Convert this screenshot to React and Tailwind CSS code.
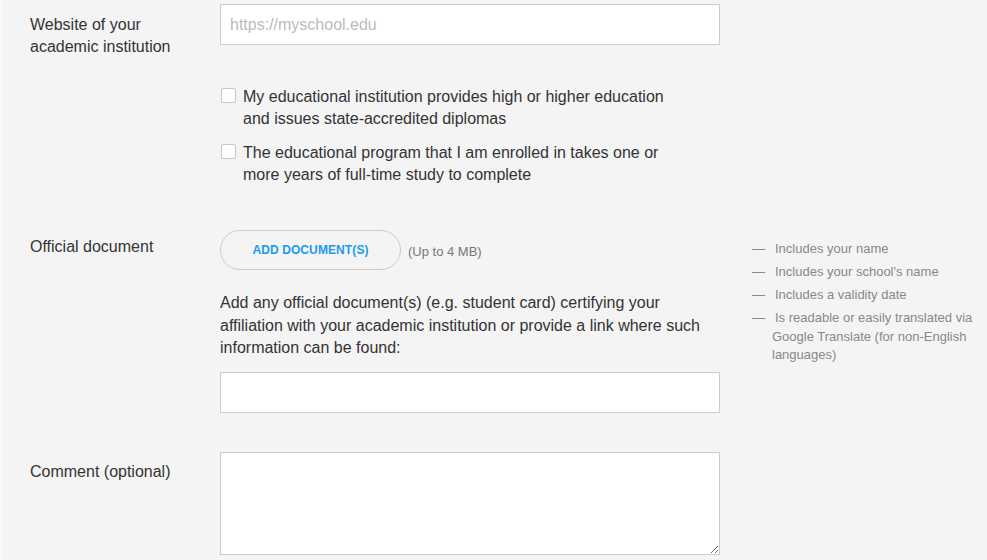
export default function App() {
  const font = { fontFamily: '"Liberation Sans", Arial, sans-serif' };
  return (
    <div style={font} className="w-[987px] h-[560px] overflow-hidden bg-[#f4f4f4] border-l-2 border-[#fafafa] text-[#333]">
      <div className="flex pl-[28px]">
        {/* left labels + center */}
        <div className="w-[692px] shrink-0">
          {/* Website row */}
          <div className="flex pt-[4px]">
            <div className="w-[190px] shrink-0 text-[16px] leading-[22px] pt-[10px]">
              Website of your<br />academic institution
            </div>
            <div className="w-[500px]">
              <input
                className="w-[500px] h-[41px] bg-white border border-[#ccc] px-[9px] text-[16px] outline-none placeholder:text-[#bbb]"
                placeholder="https://myschool.edu"
                style={font}
              />
              <div className="mt-[41px] flex flex-col gap-[12px]">
                <label className="flex items-start">
                  <span className="mt-[2px] ml-[1px] w-[15px] h-[15px] bg-white border border-[#c8c8c8] rounded-[2px] shrink-0" />
                  <span className="ml-[7px] text-[16px] leading-[22px]">
                    My educational institution provides high or higher education<br />and issues state-accredited diplomas
                  </span>
                </label>
                <label className="flex items-start">
                  <span className="mt-[2px] ml-[1px] w-[15px] h-[15px] bg-white border border-[#c8c8c8] rounded-[2px] shrink-0" />
                  <span className="ml-[7px] text-[16px] leading-[22px]">
                    The educational program that I am enrolled in takes one or<br />more years of full-time study to complete
                  </span>
                </label>
              </div>
            </div>
          </div>

          {/* Official document row */}
          <div className="flex mt-[44px]">
            <div className="w-[190px] shrink-0 text-[16px] leading-[22px] pt-[6px]">Official document</div>
            <div className="w-[500px]">
              <div className="flex items-center">
                <button className="w-[181px] h-[40px] rounded-full border border-[#ccc] text-[#1a9af0] font-bold text-[12px] tracking-[0.1px]">
                  ADD DOCUMENT(S)
                </button>
                <span className="ml-[7px] mt-[3px] text-[13px] text-[#777]">(Up to 4 MB)</span>
              </div>
              <p className="mt-[22px] text-[16px] leading-[22.5px]">
                Add any official document(s) (e.g. student card) certifying your affiliation with your academic institution or provide a link where such information can be found:
              </p>
              <input
                className="mt-[12px] w-[500px] h-[41px] bg-white border border-[#ccc] px-[10px] text-[16px] outline-none"
                style={font}
              />
            </div>
          </div>

          {/* Comment row */}
          <div className="flex mt-[39px]">
            <div className="w-[190px] shrink-0 text-[16px] leading-[22px] pt-[9px]">Comment (optional)</div>
            <textarea
              className="w-[500px] h-[103px] bg-white border border-[#ccc] outline-none resize"
              style={font}
            />
          </div>
        </div>

        {/* right list */}
        <ul className="ml-[30px] mt-[240px] w-[228px] text-[13px] text-[#888] leading-[18.5px] flex flex-col gap-[4.5px]">
          {[
            "Includes your name",
            "Includes your school's name",
            "Includes a validity date",
            "Is readable or easily translated via Google Translate (for non-English languages)",
          ].map((t) => (
            <li key={t} className="pl-[20px] -indent-[20px]">
              <span className="inline-block w-[23px] indent-0">—</span>
              {t}
            </li>
          ))}
        </ul>
      </div>
    </div>
  );
}
